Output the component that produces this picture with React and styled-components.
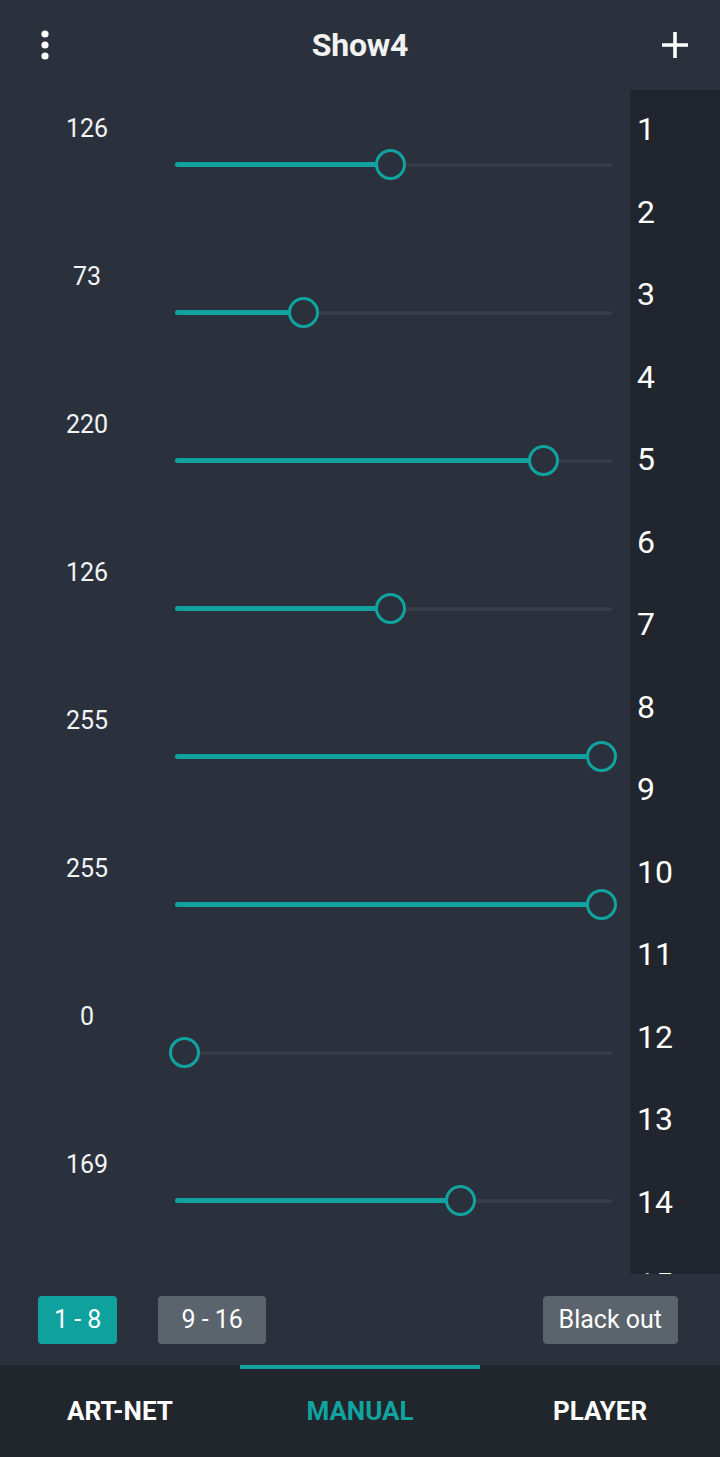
import React from 'react';
import styled, { createGlobalStyle } from 'styled-components';

const GlobalStyle = createGlobalStyle`
  html, body {
    margin: 0;
    padding: 0;
    background: #2b313c;
  }
  body {
    font-family: Roboto, "Noto Sans", "Liberation Sans", sans-serif;
    color: #fff;
  }
`;

const TEAL = '#11a39f';
const BG = '#2b313c';

const Screen = styled.div`
  width: 720px;
  height: 1457px;
  display: flex;
  flex-direction: column;
  background: ${BG};
  overflow: hidden;
`;

const Header = styled.header`
  height: 90px;
  flex: none;
  display: grid;
  grid-template-columns: 90px 1fr 90px;
  align-items: center;
`;

const IconButton = styled.button`
  width: 90px;
  height: 90px;
  display: flex;
  align-items: center;
  justify-content: center;
  background: none;
  border: none;
  padding: 0;
  color: #fff;
`;

const Title = styled.h1`
  margin: 0;
  text-align: center;
  font-size: 32px;
  font-weight: 700;
  color: #f2f2f2;
  letter-spacing: -0.2px;
`;

const Body = styled.main`
  height: 1184px;
  flex: none;
  display: flex;
`;

const SliderList = styled.section`
  width: 630px;
  display: flex;
  flex-direction: column;
`;

const Row = styled.div`
  height: 148px;
  display: flex;
  flex-direction: column;
`;

const ValueLabel = styled.div`
  width: 174px;
  margin-top: 24px;
  height: 30px;
  line-height: 30px;
  text-align: center;
  font-size: 25px;
  color: #f4f4f4;
`;

const SliderBox = styled.div`
  position: relative;
  margin-left: 175px;
  margin-top: 5px;
  width: 437px;
  height: 31px;
  display: flex;
  align-items: center;
`;

const Rail = styled.div`
  width: 100%;
  height: 4px;
  border-radius: 2px;
  background: #363c48;
`;

const Fill = styled.div`
  position: absolute;
  left: 0;
  top: 13px;
  height: 5px;
  border-radius: 3px;
  background: ${TEAL};
`;

const Thumb = styled.div`
  position: absolute;
  top: 0;
  width: 31px;
  height: 31px;
  box-sizing: border-box;
  border: 3px solid ${TEAL};
  border-radius: 50%;
  background: ${BG};
`;

const ChannelList = styled.aside`
  width: 90px;
  background: #21252d;
  overflow: hidden;
`;

const Channel = styled.div`
  box-sizing: border-box;
  height: 82.5px;
  display: flex;
  align-items: center;
  padding: 0 0 4px 7px;
  font-size: 32px;
  color: #fff;
`;

const Controls = styled.div`
  height: 91px;
  flex: none;
  display: flex;
  align-items: center;
  gap: 41px;
  padding: 0 42px 0 38px;
`;

const PageButton = styled.button`
  height: 48px;
  padding: 0 ${(p) => (p.$wide ? '23px' : '16px')};
  border: none;
  border-radius: 4px;
  font-family: inherit;
  font-size: 25px;
  color: #fff;
  background: ${(p) => (p.$active ? '#0ea19d' : '#5b636d')};
  margin-left: ${(p) => (p.$push ? 'auto' : '0')};
`;

const Nav = styled.nav`
  height: 92px;
  flex: none;
  display: grid;
  grid-template-columns: repeat(3, 1fr);
  background: #21252c;
`;

const Tab = styled.div`
  display: flex;
  align-items: center;
  justify-content: center;
  font-size: 26px;
  font-weight: 700;
  color: ${(p) => (p.$active ? TEAL : '#fff')};
  box-shadow: ${(p) => (p.$active ? `inset 0 4px 0 ${TEAL}` : 'none')};
`;

const values = [126, 73, 220, 126, 255, 255, 0, 169];

function Slider({ value }) {
  const center = 9 + (value / 255) * 417;
  return (
    <SliderBox>
      <Rail />
      <Fill style={{ width: center }} />
      <Thumb style={{ left: center - 15.5 }} />
    </SliderBox>
  );
}

export default function App() {
  return (
    <>
      <GlobalStyle />
      <Screen>
        <Header>
          <IconButton aria-label="menu">
            <svg width="10" height="34" viewBox="0 0 10 34">
              <circle cx="5" cy="6" r="3.6" fill="#fff" />
              <circle cx="5" cy="17" r="3.6" fill="#fff" />
              <circle cx="5" cy="28" r="3.6" fill="#fff" />
            </svg>
          </IconButton>
          <Title>Show4</Title>
          <IconButton aria-label="add">
            <svg width="28" height="28" viewBox="0 0 28 28">
              <path d="M14 1v26M1 14h26" stroke="#fff" strokeWidth="3.6" />
            </svg>
          </IconButton>
        </Header>
        <Body>
          <SliderList>
            {values.map((v, i) => (
              <Row key={i}>
                <ValueLabel>{v}</ValueLabel>
                <Slider value={v} />
              </Row>
            ))}
          </SliderList>
          <ChannelList>
            {Array.from({ length: 15 }, (_, i) => (
              <Channel key={i}>{i + 1}</Channel>
            ))}
          </ChannelList>
        </Body>
        <Controls>
          <PageButton $active>1 - 8</PageButton>
          <PageButton $wide>9 - 16</PageButton>
          <PageButton $push>Black out</PageButton>
        </Controls>
        <Nav>
          <Tab>ART-NET</Tab>
          <Tab $active>MANUAL</Tab>
          <Tab>PLAYER</Tab>
        </Nav>
      </Screen>
    </>
  );
}
